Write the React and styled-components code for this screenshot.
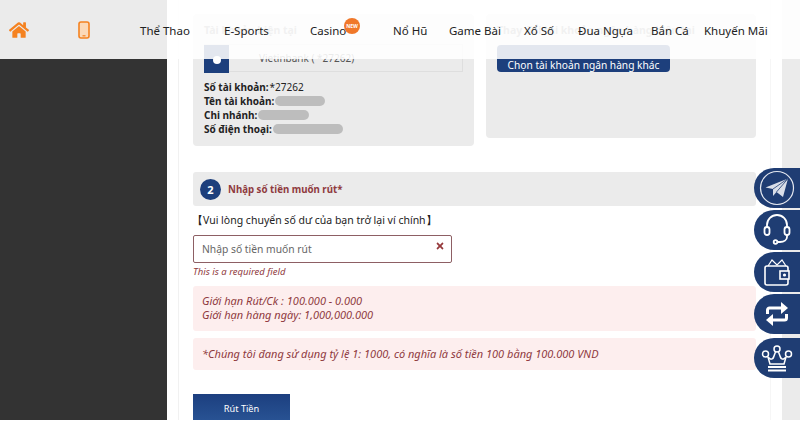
import React from 'react';
import styled, { createGlobalStyle } from 'styled-components';
import { FaHome, FaTimes } from 'react-icons/fa';

const GlobalStyle = createGlobalStyle`
  html, body {
    margin: 0;
    padding: 0;
    background: #fff;
  }
  body {
    width: 800px;
    height: 424px;
    overflow: hidden;
    font-family: "Noto Sans", "Open Sans", sans-serif;
  }
  * {
    box-sizing: border-box;
  }
`

const Page = styled.div`
  position: relative;
  width: 800px;
  height: 424px;
  overflow: hidden;
`

const Frame = styled.div`
  display: flex;
  height: 420px;
  overflow: hidden;
`

const Sidebar = styled.div`
  width: 167px;
  margin-top: 59px;
  background: #333;
`

const Main = styled.div`
  width: 593px;
  margin-left: 11px;
  padding: 14px 14px 0;
  border-left: 1px solid #f1f1f1;
  border-right: 1px solid #f6f6f6;
`

const RightStrip = styled.div`
  width: 18px;
  margin-left: 11px;
  background: #ebebeb;
`

const Header = styled.div`
  position: absolute;
  top: 0;
  left: 0;
  display: flex;
  width: 800px;
  height: 59px;
  background: rgba(255, 255, 255, 0.88);
`

const HeaderIcons = styled.div`
  display: flex;
  width: 167px;
  background: #ebebeb;
`

const IconCell = styled.div`
  display: flex;
  align-items: center;
  justify-content: center;
  width: ${p => p.$w}px;
  color: #f58220;
`

const Nav = styled.div`
  display: flex;
  align-items: center;
  margin-left: -27px;
  padding-top: 1px;
`

const NavItem = styled.div`
  position: relative;
  width: ${p => p.$w}px;
  font-size: 11.5px;
  color: #222;
  white-space: nowrap;
`

const NewBadge = styled.span`
  position: absolute;
  top: -5px;
  left: 34px;
  display: flex;
  align-items: center;
  justify-content: center;
  width: 16px;
  height: 16px;
  border-radius: 50%;
  background: #f0782a;
  color: #fff;
  font-size: 5px;
  font-weight: 700;
`

const CardRow = styled.div`
  display: flex;
  align-items: flex-start;
  gap: 12px;
`

const Card = styled.div`
  width: ${p => p.$w}px;
  height: ${p => p.$h}px;
  padding: 8px 11px;
  border-radius: 4px;
  background: #ebebeb;
`

const CardTitle = styled.div`
  height: 16px;
  font-size: 10.5px;
  line-height: 16px;
  font-weight: 700;
  color: #888;
  white-space: nowrap;
`

const BankRow = styled.div`
  display: flex;
  align-items: flex-start;
  height: 28px;
  margin-top: 6px;
  border: 1px solid #dedede;
  border-left: none;
`

const BankLogo = styled.div`
  display: flex;
  align-items: center;
  justify-content: center;
  width: 25px;
  height: 28px;
  padding-top: 2px;
  flex: none;
  background: #1d3f7c;

  &::after {
    content: '';
    width: 8px;
    height: 8px;
    border-radius: 50%;
    background: #fff;
  }
`

const BankName = styled.div`
  margin-left: 30px;
  font-size: 10px;
  line-height: 27px;
  color: #555;
`

const InfoList = styled.div`
  margin-top: 8px;
`

const InfoLine = styled.div`
  display: flex;
  align-items: center;
  gap: 1px;
  height: 14px;
  font-size: 10px;
  color: #222;

  b {
    font-weight: 700;
  }
`

const Censored = styled.span`
  width: ${p => p.$w}px;
  height: 10px;
  border-radius: 5px;
  background: #bdbdbd;
`

const OtherBankButton = styled.div`
  display: flex;
  align-items: flex-end;
  justify-content: center;
  width: 173px;
  height: 27px;
  margin-top: 7px;
  border-radius: 4px;
  background: #1d3f7c;
  color: #fff;
  font-size: 10.2px;
  line-height: 14px;
`

const StepBar = styled.div`
  display: flex;
  align-items: center;
  gap: 7px;
  height: 34px;
  margin-top: 26px;
  padding-left: 7px;
  border-radius: 3px;
  background: #ebebeb;
`

const StepNumber = styled.div`
  display: flex;
  align-items: center;
  justify-content: center;
  width: 21px;
  height: 21px;
  border-radius: 50%;
  background: #1d3f7c;
  color: #fff;
  font-size: 11px;
  font-weight: 700;
`

const StepTitle = styled.div`
  font-size: 9.7px;
  font-weight: 700;
  color: #8f3a3e;
`

const Notice = styled.div`
  height: 16px;
  margin-top: 6px;
  margin-left: -1px;
  font-size: 10.5px;
  line-height: 16px;
  color: #222;
`

const InputBox = styled.div`
  display: flex;
  align-items: center;
  justify-content: space-between;
  width: 259px;
  height: 28px;
  margin-top: 7px;
  padding: 0 6px 0 8px;
  border: 1px solid #8d5f64;
  border-radius: 2px;
  font-size: 10.3px;
  color: #666;
`

const CloseMark = styled(FaTimes)`
  width: 10px;
  height: 10px;
  margin-top: -6px;
  color: #963a3c;
`

const ErrorText = styled.div`
  height: 14px;
  margin-top: 2px;
  font-size: 9.5px;
  line-height: 14px;
  font-style: italic;
  color: #8f3a3e;
`

const Alert = styled.div`
  display: flex;
  flex-direction: column;
  justify-content: center;
  height: ${p => p.$h}px;
  margin-top: ${p => p.$top}px;
  padding: 0 0 1px 9px;
  border-radius: 3px;
  background: #fdeeee;
  font-size: 11px;
  line-height: 14px;
  font-style: italic;
  color: #8f3a3e;
`

const SubmitButton = styled.div`
  display: flex;
  align-items: center;
  justify-content: center;
  width: 97px;
  height: 30px;
  margin-top: 24px;
  padding-bottom: 2px;
  background: linear-gradient(#1c3f7f, #2a5596);
  color: #fff;
  font-size: 9.2px;
`

const SideStack = styled.div`
  position: absolute;
  top: 168px;
  right: 0;
  display: flex;
  flex-direction: column;
  gap: 2px;
`

const SideButton = styled.div`
  display: flex;
  align-items: center;
  justify-content: center;
  width: 46px;
  height: 40px;
  margin-top: ${p => p.$top || 0}px;
  border-radius: 20px 0 0 20px;
  background: #1f3d73;
  color: #fff;
`

const PhoneIcon = () => (
  <svg width="12" height="18" viewBox="0 0 12 18" fill="none">
    <rect x="1" y="1" width="10" height="16" rx="2" fill="#fbd9b8" stroke="#f58220" strokeWidth="1.6" />
    <path d="M4.5 14.8h3" stroke="#f58220" strokeWidth="1.2" />
  </svg>
)

const TelegramIcon = () => (
  <svg width="36" height="36" viewBox="0 0 36 36" fill="none">
    <circle cx="18" cy="18" r="16.5" stroke="#e4e8f0" strokeWidth="1.2" />
    <path d="M6.5 17.5 29 8.5 24 27l-6.5-5-3.5 4v-7z" fill="#d9dee8" />
    <path d="M14 19 29 8.5 17.5 22" stroke="#1f3d73" strokeWidth="0.8" />
  </svg>
)

const HeadsetIcon = () => (
  <svg width="28" height="32" viewBox="0 0 28 32" fill="none" stroke="#fff" strokeWidth="1.8">
    <path d="M4 14v-3a10 10 0 0 1 20 0v3" />
    <rect x="1.5" y="13" width="5" height="8" rx="2.5" />
    <rect x="21.5" y="13" width="5" height="8" rx="2.5" />
    <path d="M24 21v2c0 3-3 5-7 5h-3" />
    <circle cx="12.5" cy="28" r="1.8" />
  </svg>
)

const WalletIcon = () => (
  <svg width="28" height="30" viewBox="0 0 28 30" fill="none" stroke="#fff" strokeWidth="1.6">
    <path d="M5 9 9 3l5 5 5-5 4 6" strokeWidth="1.2" />
    <rect x="2" y="9" width="23" height="19" rx="2" />
    <rect x="17" y="14" width="9" height="8" fill="#1f3d73" />
    <circle cx="21.5" cy="18" r="1.6" fill="#fff" stroke="none" />
  </svg>
)

const SwapIcon = () => (
  <svg width="24" height="26" viewBox="0 0 24 26" fill="none" stroke="#fff" strokeWidth="3">
    <path d="M2.5 13V9a2 2 0 0 1 2-2H18" />
    <path d="M16 1 23 7l-7 6z" fill="#fff" stroke="none" />
    <path d="M21.5 13v4a2 2 0 0 1-2 2H6" />
    <path d="M8 13 1 19l7 6z" fill="#fff" stroke="none" />
  </svg>
)

const CrownIcon = () => (
  <svg width="32" height="32" viewBox="0 0 32 32" fill="none" stroke="#fff" strokeWidth="1.5">
    <circle cx="16" cy="7" r="3" />
    <circle cx="4.5" cy="12" r="3" />
    <circle cx="27.5" cy="12" r="3" />
    <path d="M7 15c2 3 5 3 6-1l1.5-4M25 15c-2 3-5 3-6-1l-1.5-4" />
    <path d="M7 15l2 7h14l2-7" />
    <path d="M7 25h18M7 28.5h18" strokeWidth="1.8" />
  </svg>
)

const navItems = [
  ['Thể Thao', 84],
  ['E-Sports', 86],
  ['Casino', 83],
  ['Nổ Hũ', 56],
  ['Game Bài', 75],
  ['Xổ Số', 54],
  ['Đua Ngựa', 73],
  ['Bắn Cá', 53],
  ['Khuyến Mãi', 70],
];

const App = () => (
  <Page>
    <GlobalStyle />
    <Frame>
      <Sidebar />
      <Main>
        <CardRow>
          <Card $w={281} $h={132}>
            <CardTitle>Tài khoản hiện tại</CardTitle>
            <BankRow>
              <BankLogo />
              <BankName>Vietinbank ( *27262)</BankName>
            </BankRow>
            <InfoList>
              <InfoLine><b>Số tài khoản:</b> *27262</InfoLine>
              <InfoLine><b>Tên tài khoản:</b> <Censored $w={50} /></InfoLine>
              <InfoLine><b>Chi nhánh:</b> <Censored $w={51} /></InfoLine>
              <InfoLine><b>Số điện thoại:</b> <Censored $w={70} /></InfoLine>
            </InfoList>
          </Card>
          <Card $w={270} $h={124}>
            <CardTitle>Thay đổi tài khoản ngân hàng hiện tại</CardTitle>
            <OtherBankButton>Chọn tài khoản ngân hàng khác</OtherBankButton>
          </Card>
        </CardRow>

        <StepBar>
          <StepNumber>2</StepNumber>
          <StepTitle>Nhập số tiền muốn rút*</StepTitle>
        </StepBar>
        <Notice>【Vui lòng chuyển số dư của bạn trở lại ví chính】</Notice>
        <InputBox>
          Nhập số tiền muốn rút
          <CloseMark />
        </InputBox>
        <ErrorText>This is a required field</ErrorText>
        <Alert $h={45} $top={7}>
          <div>Giới hạn Rút/Ck : 100.000 - 0.000</div>
          <div>Giới hạn hàng ngày: 1,000,000.000</div>
        </Alert>
        <Alert $h={32} $top={7}>
          *Chúng tôi đang sử dụng tỷ lệ 1: 1000, có nghĩa là số tiền 100 bằng 100.000 VND
        </Alert>
        <SubmitButton>Rút Tiền</SubmitButton>
      </Main>
      <RightStrip />
    </Frame>

    <Header>
      <HeaderIcons>
        <IconCell $w={37}><FaHome size={20} color="#f58220" /></IconCell>
        <IconCell $w={94}><PhoneIcon /></IconCell>
      </HeaderIcons>
      <Nav>
        {navItems.map(([label, w]) => (
          <NavItem key={label} $w={w}>
            {label}
            {label === 'Casino' && <NewBadge>NEW</NewBadge>}
          </NavItem>
        ))}
      </Nav>
    </Header>

    <SideStack>
      <SideButton><TelegramIcon /></SideButton>
      <SideButton><HeadsetIcon /></SideButton>
      <SideButton><WalletIcon /></SideButton>
      <SideButton><SwapIcon /></SideButton>
      <SideButton $top={2}><CrownIcon /></SideButton>
    </SideStack>
  </Page>
);

export default App;
